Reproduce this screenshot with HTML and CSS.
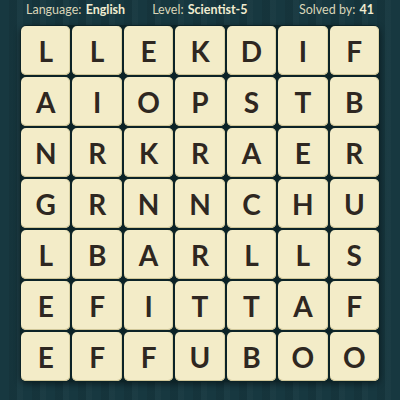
FILE: index.html
```html
<!DOCTYPE html>
<html>
<head>
<meta charset="utf-8">
<link rel="stylesheet" href="styles.css">
</head>
<body>
<div class="page">
  <div class="header">
    <span class="info lang">Language: <b>English</b></span>
    <span class="info level">Level: <b>Scientist-5</b></span>
    <span class="info solved">Solved by: <b>41</b></span>
  </div>
  <div class="board">
    <div class="tile">L</div><div class="tile">L</div><div class="tile">E</div><div class="tile">K</div><div class="tile">D</div><div class="tile">I</div><div class="tile">F</div>
    <div class="tile">A</div><div class="tile">I</div><div class="tile">O</div><div class="tile">P</div><div class="tile">S</div><div class="tile">T</div><div class="tile">B</div>
    <div class="tile">N</div><div class="tile">R</div><div class="tile">K</div><div class="tile">R</div><div class="tile">A</div><div class="tile">E</div><div class="tile">R</div>
    <div class="tile">G</div><div class="tile">R</div><div class="tile">N</div><div class="tile">N</div><div class="tile">C</div><div class="tile">H</div><div class="tile">U</div>
    <div class="tile">L</div><div class="tile">B</div><div class="tile">A</div><div class="tile">R</div><div class="tile">L</div><div class="tile">L</div><div class="tile">S</div>
    <div class="tile">E</div><div class="tile">F</div><div class="tile">I</div><div class="tile">T</div><div class="tile">T</div><div class="tile">A</div><div class="tile">F</div>
    <div class="tile">E</div><div class="tile">F</div><div class="tile">F</div><div class="tile">U</div><div class="tile">B</div><div class="tile">O</div><div class="tile">O</div>
  </div>
</div>
</body>
</html>
```
FILE: styles.css
```css
html, body {
  margin: 0;
  padding: 0;
}
body {
  width: 400px;
  height: 400px;
  overflow: hidden;
  background-color: #173840;
  background-image: repeating-linear-gradient(90deg,
    rgba(0,0,0,0) 0px, rgba(0,0,0,0) 9px,
    rgba(0,0,0,0.07) 9px, rgba(0,0,0,0.07) 17px,
    rgba(255,255,255,0.02) 17px, rgba(255,255,255,0.02) 23px);
  font-family: Lato, "Open Sans", sans-serif;
}
.page {
  display: flex;
  flex-direction: column;
  padding: 0 0 0 20px;
}
.header {
  height: 25px;
  width: 354px;
  display: flex;
  align-items: center;
  padding: 0 0 0 6px;
  box-sizing: border-box;
  font-size: 12.5px;
  color: #d9d5b8;
  line-height: 1;
  margin-top: -2px;
  margin-bottom: 2px;
}
.level {
  margin-left: 27px;
}
.solved {
  margin-left: auto;
}
.info b {
  color: #f1ecd0;
  font-weight: 700;
  margin-left: 1px;
}
.board {
  width: 358px;
  display: grid;
  grid-template-columns: repeat(7, 1fr);
  grid-auto-rows: 49px;
  gap: 2px;
  padding: 1px;
  background: #0c2327;
  border-radius: 7px;
  box-shadow: 0 2px 6px rgba(0,0,0,0.45);
  box-sizing: content-box;
}
.tile {
  background: #f3ecc8;
  border-radius: 5px;
  box-shadow: inset 0 -1px 0 #cfc698, inset -1px 0 0 #ddd4a8;
  display: flex;
  align-items: center;
  justify-content: center;
  font-size: 28px;
  font-weight: 700;
  color: #2e2721;
  line-height: 1;
}
```
